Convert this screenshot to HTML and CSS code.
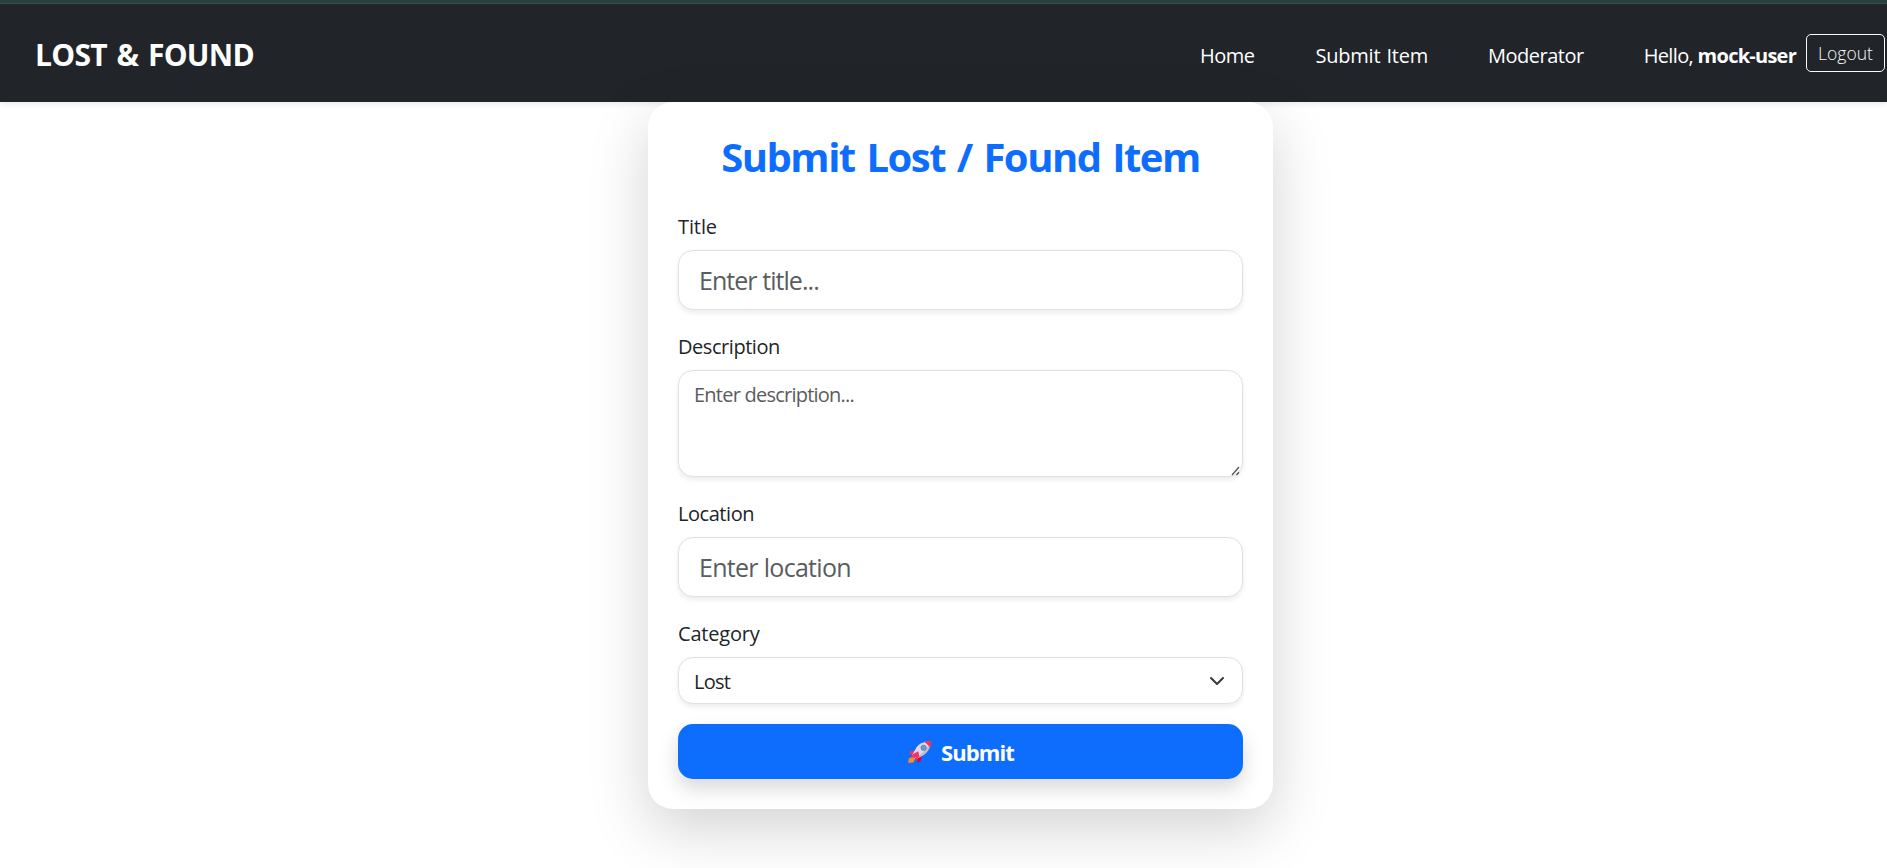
FILE: index.html
```html
<!DOCTYPE html>
<html lang="en">
<head>
<meta charset="utf-8">
<title>Lost &amp; Found</title>
<link rel="stylesheet" href="styles.css">
</head>
<body>
<header class="navbar">
  <a class="brand">LOST &amp; FOUND</a>
  <nav class="links">
    <a class="link home">Home</a>
    <a class="link submit-item">Submit Item</a>
    <a class="link">Moderator</a>
    <span class="hello">Hello, <strong class="user">mock-user</strong></span>
    <button class="logout" type="button">Logout</button>
  </nav>
</header>
<main class="card">
  <h2 class="heading">Submit Lost / Found Item</h2>
  <form class="form">
    <div class="field">
      <label class="label short" for="title">Title</label>
      <input class="control large title-input" id="title" placeholder="Enter title...">
    </div>
    <div class="field">
      <label class="label" for="description">Description</label>
      <div class="area-wrap">
        <textarea class="control area" id="description" placeholder="Enter description..."></textarea>
        <svg class="grip" viewBox="0 0 10 10" aria-hidden="true"><path d="M1 9 8 1M5.500 9 8 6.200"/></svg>
      </div>
    </div>
    <div class="field">
      <label class="label" for="location">Location</label>
      <input class="control large" id="location" placeholder="Enter location">
    </div>
    <div class="field">
      <label class="label category" for="category">Category</label>
      <div class="control select" id="category"><span>Lost</span>
        <svg class="chevron" viewBox="0 0 16 16" aria-hidden="true"><path d="m2 5 6 6 6-6"/></svg>
      </div>
    </div>
    <button class="submit" type="button">
      <svg class="rocket" viewBox="0 0 24 22" aria-hidden="true">
        <path fill="#f8314f" d="M9 9.500 2.200 10.200 1.200 13l4.600 1z"/>
        <path fill="#ca0b4a" d="m14 14-1.200 6.600-3.200.8-.6-4.600z"/>
        <path fill="#ff8a1f" d="M4.800 15.200.8 17.400.2 22l5.200-.6 1.800-3.800z"/>
        <path fill="#e1d8ec" d="M22.600.4C16 .2 11.400 2.400 8.600 6.200L4.200 14l4.400 3.800 7-3.800c4.200-3.200 7-7.200 7-13.600z"/>
        <path fill="#c3b9cc" d="M22.600.4C20 7 15 12.600 7.400 16.800l1.200 1 7-3.800c4.200-3.200 7-7.200 7-13.600z"/>
        <path fill="#f8314f" d="M23.400.1c-2.600-.2-5 .1-7 .7L22.200 6.200c.8-1.900 1.200-3.900 1.200-6.100z"/>
        <path fill="#f83160" d="M10.300 10.300 5.200 13l-2.600 4 5-1 .2 4 3.500-4.600z"/>
        <circle cx="15.600" cy="6.800" r="2.600" fill="#4aa8e0" stroke="#83769a"/>
      </svg>
      <span class="submit-text">Submit</span>
    </button>
  </form>
</main>
</body>
</html>
```
FILE: styles.css
```css
* { box-sizing: border-box; }
body {
  margin: 0;
  height: 868px;
  overflow: hidden;
  background: #fff;
  color: #212529;
  font-family: "Open Sans", "Noto Sans", sans-serif;
  font-size: 20px;
  line-height: 30px;
}
.navbar {
  display: flex;
  align-items: center;
  justify-content: space-between;
  height: 102px;
  padding: 4px 2px 0 36px;
  border-top: 3px solid #28403d;
  background: linear-gradient(#3f4d4c 1px, #212529 1px);
  box-shadow: 0 2.5px 5px rgba(0, 0, 0, .075);
  color: #fff;
}
.brand {
  margin-left: -1px;
  font-size: 30px;
  font-weight: 700;
  letter-spacing: -.7px;
  word-spacing: 2.5px;
}
.links { display: flex; align-items: center; font-weight: 500; }
.link { margin-right: 60px; padding-top: 2px; letter-spacing: -.5px; }
.home { margin-right: 61px; }
.submit-item { letter-spacing: -.2px; word-spacing: 1px; }
.hello { margin-right: 10px; padding-top: 2px; font-weight: 400; letter-spacing: -.65px; }
.user { font-weight: 700; letter-spacing: -.75px; }
.logout {
  width: 79px;
  height: 38px;
  margin-bottom: 4px;
  padding: 0;
  border: 1px solid #f8f9fa;
  border-radius: 5px;
  background: none;
  color: #f8f9fa;
  font: 300 17.5px/26px "Open Sans", sans-serif;
}
.card {
  position: relative;
  width: 625px;
  height: 707px;
  margin-left: 648px;
  padding: 31px 30px 30px;
  border-radius: 25px;
  background: #fff;
  box-shadow: 0 20px 60px rgba(0, 0, 0, .175);
}
.heading {
  margin: 0 0 31px;
  color: #0d6efd;
  font-size: 40px;
  font-weight: 700;
  line-height: 48px;
  letter-spacing: -1.5px;
  word-spacing: 2.8px;
  text-align: center;
  white-space: nowrap;
}
.field { margin-bottom: 20px; }
.label {
  display: block;
  margin-bottom: 8px;
  padding-top: 2px;
  font-weight: 500;
  letter-spacing: -.45px;
}
.field:first-child .label { padding-top: 0; }
.short { letter-spacing: -.1px; }
.category { letter-spacing: -.2px; }
.control {
  display: block;
  width: 100%;
  border: 1px solid #dee2e6;
  border-radius: 15px;
  outline: 0;
  background: #fff;
  box-shadow: 0 2.5px 5px rgba(0, 0, 0, .075);
  color: #212529;
  font: 400 20px/30px "Open Sans", sans-serif;
  letter-spacing: -.77px;
}
.control::placeholder { color: #595c5f; opacity: 1; }
.large { height: 60px; padding: 10px 20px; font-size: 25px; letter-spacing: -.7px; }
.title-input { letter-spacing: -.95px; }
.area-wrap { position: relative; }
.area { height: 107px; padding: 9px 15px; resize: none; }
.grip {
  position: absolute;
  right: 2px;
  bottom: 1px;
  width: 10px;
  height: 10px;
  fill: none;
  stroke: #50545a;
  stroke-width: 1.3;
}
.select {
  display: flex;
  align-items: center;
  justify-content: space-between;
  height: 47px;
  padding: 2px 17px 0 15px;
}
.chevron {
  width: 16px;
  height: 16px;
  margin-bottom: 2px;
  fill: none;
  stroke: #343a40;
  stroke-width: 2;
  stroke-linecap: round;
  stroke-linejoin: round;
}
.submit {
  display: flex;
  align-items: center;
  justify-content: center;
  gap: 9px;
  width: 100%;
  height: 55px;
  padding: 1px 0 0 1px;
  border: 0;
  border-radius: 15px;
  background: #0d6efd;
  box-shadow: 0 10px 20px rgba(0, 0, 0, .15);
  color: #fff;
  font: 700 22px/30px "Open Sans", sans-serif;
  letter-spacing: -.9px;
}
.rocket { width: 24px; height: 22px; }
```
